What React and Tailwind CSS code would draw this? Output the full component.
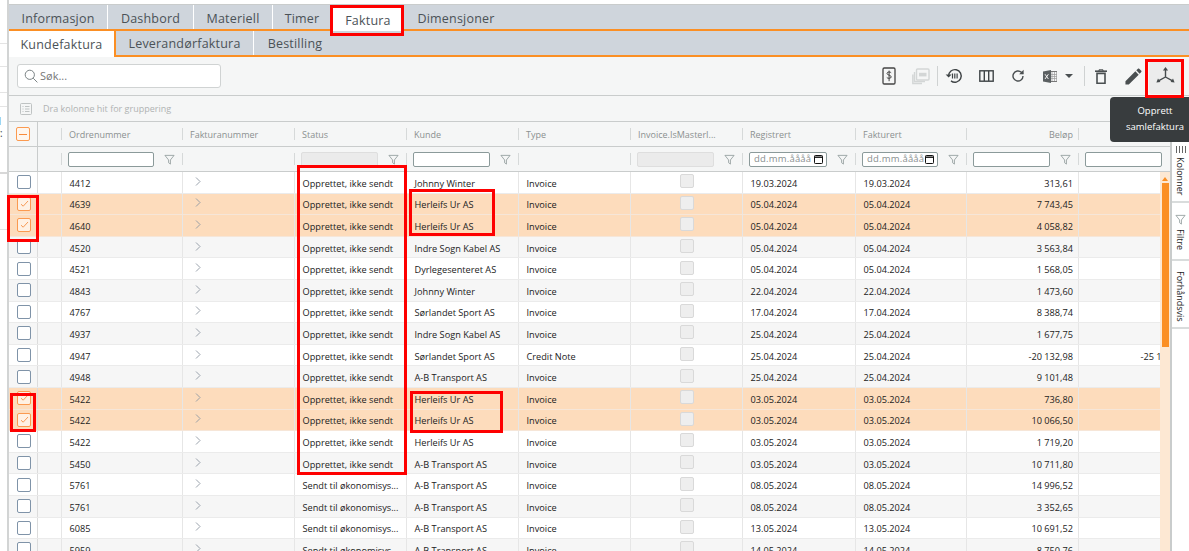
import React from "react";

const OP = "Opprettet, ikke sendt";
const SE = "Sendt til økonomisys...";
const HU = "Herleifs Ur AS";
const AB = "A-B Transport AS";
const JW = "Johnny Winter";
const IS = "Indre Sogn Kabel AS";
const SS = "Sørlandet Sport AS";

const rows = [
  ["4412", OP, JW, "Invoice", "19.03.2024", "313,61", "w"],
  ["4639", OP, HU, "Invoice", "05.04.2024", "7 743,45", "s"],
  ["4640", OP, HU, "Invoice", "05.04.2024", "4 058,82", "s"],
  ["4520", OP, IS, "Invoice", "05.04.2024", "3 563,84", "g"],
  ["4521", OP, "Dyrlegesenteret AS", "Invoice", "05.04.2024", "1 568,05", "w"],
  ["4843", OP, JW, "Invoice", "22.04.2024", "1 473,60", "g"],
  ["4767", OP, SS, "Invoice", "17.04.2024", "8 388,74", "w"],
  ["4937", OP, IS, "Invoice", "25.04.2024", "1 677,75", "g"],
  ["4947", OP, SS, "Credit Note", "25.04.2024", "-20 132,98", "w", "-25 166,23"],
  ["4948", OP, AB, "Invoice", "25.04.2024", "9 101,48", "g"],
  ["5422", OP, HU, "Invoice", "03.05.2024", "736,80", "s"],
  ["5422", OP, HU, "Invoice", "03.05.2024", "10 066,50", "s"],
  ["5422", OP, HU, "Invoice", "03.05.2024", "1 719,20", "w"],
  ["5450", OP, AB, "Invoice", "03.05.2024", "10 711,80", "g"],
  ["5761", SE, AB, "Invoice", "08.05.2024", "14 996,52", "w"],
  ["5761", SE, AB, "Invoice", "08.05.2024", "3 352,65", "g"],
  ["6085", SE, AB, "Invoice", "13.05.2024", "10 691,52", "w"],
  ["5959", SE, AB, "Invoice", "14.05.2024", "8 750,76", "g"],
];

const rowBg = {
  w: "bg-white border-[#ebebeb]",
  g: "bg-[#f6f6f6] border-[#ebebeb]",
  s: "bg-[#fddcbc] border-[#f6e6d8]",
};

const Funnel = () => (
  <svg className="block" width="11" height="11" viewBox="0 0 12 12" fill="none" stroke="#8f9a9a" strokeWidth="0.9" strokeLinejoin="round">
    <path d="M1 1.5h10L7 6.5v4.5L5 9.5v-3z" />
  </svg>
);

const Chevron = () => (
  <svg className="block" width="6" height="9" viewBox="0 0 6 9" fill="none" stroke="#8e97a3" strokeWidth="0.9">
    <path d="M1 0.5l4 4-4 4" />
  </svg>
);

const Check = ({ on }) =>
  on ? (
    <div className="w-[14px] h-[14px] rounded-[2px] border border-[#fb9a50] bg-[#fff1e4] flex items-center justify-center">
      <svg width="9" height="8" viewBox="0 0 9 8" fill="none" stroke="#f79a56" strokeWidth="1">
        <path d="M1 4.2l2.2 2L8 1" />
      </svg>
    </div>
  ) : (
    <div className="w-[14px] h-[14px] rounded-[2px] border border-[#7f93a8] bg-white" />
  );

const Sep = () => <div className="w-px h-[12px] bg-[#d6d9d9] shrink-0" />;

const HeadCell = ({ w, children, right }) => (
  <div className={`${w} shrink-0 h-full flex items-center`}>
    <Sep />
    <span className={`pl-[7px] pr-[5px] pt-[2px] flex-1 whitespace-nowrap ${right ? "text-right" : ""}`}>{children}</span>
  </div>
);

const FilterCell = ({ w, kind }) => (
  <div className={`${w} shrink-0 h-full flex items-center`}>
    <Sep />
    {kind === "none" ? null : (
      <>
        <div className="flex-1 pl-[6px] min-w-0">
          {kind === "text" && <div className="h-[15px] bg-white border border-[#8b9a9a] rounded-[2px]" />}
          {kind === "off" && <div className="h-[15px] bg-[#ebebeb] border border-[#dedede] rounded-[2px]" />}
          {kind === "date" && (
            <div className="h-[15px] bg-white border border-[#8b9a9a] rounded-[2px] flex items-center justify-between pl-[4px] pr-[3px] text-[9.5px] text-[#8a8f8f] tracking-[0.2px]">
              <span>dd.mm.åååå</span>
              <svg width="9" height="10" viewBox="0 0 9 10" fill="none" stroke="#111" strokeWidth="1">
                <rect x="0.5" y="1.5" width="8" height="8" rx="0.8" />
                <path d="M0.5 3.2h8" strokeWidth="1.4" />
              </svg>
            </div>
          )}
        </div>
        <div className="w-[28px] shrink-0 pl-[10px]">
          <Funnel />
        </div>
      </>
    )}
  </div>
);

const Cell = ({ w, right, children, center }) => (
  <div className={`${w} shrink-0 h-full flex items-center border-l border-[#e6e6e6]`}>
    {center ? (
      <div className="flex-1 flex justify-center">{children}</div>
    ) : (
      <span className={`flex-1 whitespace-nowrap pl-[7.5px] pr-[5px] pt-[3px] ${right ? "text-right" : ""}`}>{children}</span>
    )}
  </div>
);

const TopTab = ({ w, active, children }) => (
  <div
    className={`${w} shrink-0 flex items-center justify-center pt-[4px] ${
      active ? "bg-white h-[28px] self-start" : "h-full border-r border-white"
    }`}
  >
    {children}
  </div>
);

const Tool = ({ children, active, w = "w-[32px]" }) => (
  <div className={`${w} h-[35px] shrink-0 flex items-center justify-center rounded-[3px] ${active ? "bg-[#ececec]" : ""}`}>
    {children}
  </div>
);

const Toolbar = () => (
  <div className="flex items-center justify-end pr-[8px]">
    <Tool>
      <svg width="14" height="18" viewBox="0 0 14 18" fill="none" stroke="#444" strokeWidth="1.3">
        <rect x="1" y="1" width="12" height="16" rx="1.2" />
        <path d="M9.2 5.8C8.7 4.9 5 4.4 5 6.4c0 2.1 4.2 1.4 4.2 3.5 0 2-3.8 1.6-4.4.6M7.1 3.6v10.6" strokeWidth="1" />
      </svg>
    </Tool>
    <Tool>
      <svg width="18" height="17" viewBox="0 0 18 17" fill="none" stroke="#d3d6d6" strokeWidth="1.4">
        <rect x="4.5" y="1" width="12.5" height="11" rx="1" />
        <path d="M2.5 4v9.5H13M0.8 6.5v9H10" />
        <rect x="7" y="4.8" width="7.5" height="3.6" fill="#d3d6d6" stroke="none" />
      </svg>
    </Tool>
    <div className="w-px h-[20px] bg-[#cfd2d2] shrink-0" />
    <Tool>
      <svg width="18" height="16" viewBox="0 0 18 16" fill="none" stroke="#3f4446" strokeWidth="1.4">
        <path d="M3.6 8A6.3 6.3 0 1 1 6 12.9" />
        <path d="M0.6 6.4l3 3 3-3" fill="#3f4446" stroke="none" />
        <path d="M7.5 5.4v5M9.8 5.4v5M12.1 5.4v5" strokeWidth="1.2" />
      </svg>
    </Tool>
    <Tool>
      <svg width="15" height="12" viewBox="0 0 15 12" fill="none" stroke="#3f4446" strokeWidth="1.4">
        <rect x="0.8" y="0.8" width="13.4" height="10.4" />
        <path d="M5.3 1v10M9.7 1v10" />
      </svg>
    </Tool>
    <Tool>
      <svg width="14" height="14" viewBox="0 0 14 14" fill="none" stroke="#4a4f51" strokeWidth="1.4">
        <path d="M12 7a5 5 0 1 1-1.6-3.7L12 4.8" />
        <path d="M12.6 0.8v4.5H8.1" fill="#4a4f51" stroke="none" />
      </svg>
    </Tool>
    <div className="w-[4px] shrink-0" />
    <Tool w="w-[23px]">
      <svg width="14" height="13" viewBox="0 0 14 13">
        <rect x="6" y="1.5" width="8" height="10" fill="none" stroke="#777" strokeWidth="1" />
        <path d="M9 2v9M11.5 2v9M6 4.5h8M6 6.5h8M6 8.5h8" stroke="#9a9a9a" strokeWidth="0.7" />
        <path d="M0 1.5l8-1.5v13l-8-1.5z" fill="#5b6062" />
        <path d="M2 4.2l3.4 4.8M5.4 4.2L2 9" stroke="#fff" strokeWidth="0.9" />
      </svg>
    </Tool>
    <Tool w="w-[15px]">
      <svg width="8" height="4" viewBox="0 0 8 4">
        <path d="M0 0h8L4 4z" fill="#4a4f51" />
      </svg>
    </Tool>
    <div className="w-[8px] shrink-0" />
    <div className="w-px h-[20px] bg-[#cfd2d2] shrink-0" />
    <Tool>
      <svg width="12" height="15" viewBox="0 0 12 15" fill="none" stroke="#4a4f51" strokeWidth="1.6">
        <path d="M0 2.2h12" />
        <path d="M4 2V0.8h4V2" strokeWidth="1" />
        <path d="M2 4.4h8v9.8H2z" />
      </svg>
    </Tool>
    <Tool>
      <svg width="17" height="17" viewBox="2.5 2.5 19 19" fill="#4a4f51">
        <path d="M3 17.25V21h3.75L17.81 9.94l-3.75-3.75L3 17.25zM20.71 7.04c.39-.39.39-1.02 0-1.41l-2.34-2.34c-.39-.39-1.02-.39-1.41 0l-1.83 1.83 3.75 3.75 1.83-1.83z" />
      </svg>
    </Tool>
    <Tool active>
      <svg width="19" height="18" viewBox="0 0 19 18" fill="none" stroke="#454a4c" strokeWidth="1.4">
        <path d="M9.5 10V2.5M9.5 10l-6.6 3.6M9.5 10l6.6 3.6" />
        <path d="M9.5 0l2.6 3.4H6.9z M0.4 15.4l1.6-4 2.4 3.7z M18.6 15.4l-1.6-4-2.4 3.7z" fill="#454a4c" stroke="none" />
      </svg>
    </Tool>
  </div>
);

const W = {
  ord: "w-[121px]",
  col: "w-[112px]",
  fak: "w-[112px]",
  reg: "w-[113px]",
  ft: "w-[111px]",
};

const SideTab = ({ h, pt, icon, label }) => (
  <div className={`${h} ${pt} w-full border-b-2 border-[#d9dcdc] flex flex-col items-center`}>
    {icon}
    <span className="[writing-mode:vertical-rl] text-[9px] text-[#222] leading-none">{label}</span>
  </div>
);

const Red = ({ c }) => <div className={`absolute border-[3px] border-[#fe0000] pointer-events-none ${c}`} />;

export default function App() {
  return (
    <div className="relative w-[1189px] h-[551px] overflow-hidden bg-white flex font-['Open_Sans',sans-serif]">
      {/* sliver of the neighbouring panel */}
      <div className="w-[7px] shrink-0 flex flex-col text-[10px] text-[#444] leading-none overflow-hidden">
        <div className="h-[44px] border-b border-[#e4e4e4]" />
        <div className="h-[23px] border-b border-[#e4e4e4]" />
        <div className="h-[26px] border-b border-[#e4e4e4]" />
        <div className="h-[14px] border-b border-[#e4e4e4]" />
        <div className="h-[67px] border-b-2 border-[#d8d8d8] pt-[9px] whitespace-nowrap">
          <div className="-ml-[4px] h-[12px]">il</div>
          <div className="-ml-[4px] h-[12px]">r:</div>
        </div>
        <div className="h-[56px] border-b border-[#e4e4e4]" />
      </div>
      <div className="w-[2px] shrink-0 bg-[#d2d4d4]" />

      <div className="flex-1 min-w-0 flex flex-col pt-[4px]">
        {/* main tabs */}
        <div className="h-[27px] shrink-0 bg-[#cfd5dc] border-t border-[#c9cccc] border-b-2 border-b-[#fb8f24] flex text-[12.5px] text-[#4b5257] tracking-[0.2px]">
          <TopTab w="w-[99px]">Informasjon</TopTab>
          <TopTab w="w-[86px]">Dashbord</TopTab>
          <TopTab w="w-[79px]">Materiell</TopTab>
          <TopTab w="w-[59px]">Timer</TopTab>
          <TopTab w="w-[72px]" active>Faktura</TopTab>
          <div className="w-[104px] flex items-center justify-center pt-[4px]">Dimensjoner</div>
        </div>
        {/* sub tabs */}
        <div className="h-[26px] shrink-0 bg-[#cfd5dc] border-b-2 border-b-[#fb8f24] flex text-[12.5px] text-[#4b5257] tracking-[0.2px]">
          <div className="w-[107px] h-[26px] bg-white border-r-2 border-[#fb8f24] flex items-center justify-center pt-[3px]">Kundefaktura</div>
          <div className="w-[138px] flex items-center justify-center pt-[3px] border-r border-white">Leverandørfaktura</div>
          <div className="w-[82px] flex items-center justify-center pt-[3px]">Bestilling</div>
        </div>

        {/* toolbar */}
        <div className="h-[39px] shrink-0 bg-[#f5f6f6] border-b border-[#c9cccc] flex items-center justify-between pl-[8px]">
          <div className="w-[204px] h-[24px] bg-white border border-[#d0d3d3] rounded-[3px] flex items-center pl-[6px] gap-[2px]">
            <svg width="14" height="14" viewBox="0 0 14 14" fill="none" stroke="#7c8486" strokeWidth="1">
              <circle cx="5.8" cy="5.8" r="4.6" />
              <path d="M9.2 9.2l4.2 4.2" />
            </svg>
            <span className="text-[11px] text-[#777] pt-[1px]">Søk...</span>
          </div>
          <Toolbar />
        </div>

        {/* group row */}
        <div className="h-[26px] shrink-0 bg-[#f5f6f6] border-b border-[#c9cccc] flex items-center pl-[11px] gap-[11px] text-[9px] text-[#b0b3b3]">
          <svg width="12" height="12" viewBox="0 0 12 12" fill="none" stroke="#b9bdbd" strokeWidth="0.9">
            <rect x="0.5" y="0.5" width="11" height="11" rx="1" />
            <path d="M2.5 3.5h1M5 3.5h4.5M2.5 6h1M5 6h4.5M2.5 8.5h1M5 8.5h4.5" />
          </svg>
          <span>Dra kolonne hit for gruppering</span>
        </div>

        {/* grid and side panel */}
        <div className="flex-1 min-h-0 flex">
          <div className="w-[1161px] shrink-0 flex flex-col overflow-hidden">
            {/* header */}
            <div className="h-[25px] shrink-0 bg-[#f5f6f6] border-b border-[#c9cccc] flex text-[9px] text-[#8b9090]">
              <div className="w-[29px] shrink-0 h-full flex items-center pl-[7px] border-r border-[#c9cccc]">
                <div className="w-[14px] h-[14px] rounded-[2px] border border-[#fb9a50] bg-[#fff6ee] flex items-center justify-center">
                  <div className="w-[8px] h-px bg-[#f98a3a]" />
                </div>
              </div>
              <div className="w-[23px] shrink-0" />
              <HeadCell w={W.ord}>Ordrenummer</HeadCell>
              <HeadCell w={W.fak}>Fakturanummer</HeadCell>
              <HeadCell w={W.col}>Status</HeadCell>
              <HeadCell w={W.col}>Kunde</HeadCell>
              <HeadCell w={W.col}>Type</HeadCell>
              <HeadCell w={W.col}>Invoice.IsMasterI...</HeadCell>
              <HeadCell w={W.reg}>Registrert</HeadCell>
              <HeadCell w={W.ft}>Fakturert</HeadCell>
              <HeadCell w={W.col} right>Beløp</HeadCell>
              <HeadCell w={W.col} right>Bruttobeløp</HeadCell>
            </div>
            {/* filters */}
            <div className="h-[25px] shrink-0 bg-[#f5f6f6] border-b border-[#c9cccc] flex">
              <div className="w-[29px] shrink-0 h-full border-r border-[#c9cccc]" />
              <div className="w-[23px] shrink-0" />
              <FilterCell w={W.ord} kind="text" />
              <FilterCell w={W.fak} kind="none" />
              <FilterCell w={W.col} kind="off" />
              <FilterCell w={W.col} kind="text" />
              <FilterCell w={W.col} kind="none" />
              <FilterCell w={W.col} kind="off" />
              <FilterCell w={W.reg} kind="date" />
              <FilterCell w={W.ft} kind="date" />
              <FilterCell w={W.col} kind="text" />
              <div className="w-[112px] shrink-0 h-full flex items-center">
                <Sep />
                <div className="pl-[6px]">
                  <div className="w-[77px] h-[15px] bg-white border border-[#8b9a9a] rounded-[2px]" />
                </div>
              </div>
            </div>
            {/* rows */}
            <div className="flex-1 min-h-0 flex overflow-hidden">
              <div className="w-[1151px] shrink-0 overflow-hidden text-[9.2px] text-[#222]">
                {rows.map((r, i) => (
                  <div key={i} className={`h-[21.6px] flex border-b ${rowBg[r[6]]}`}>
                    <div className="w-[29px] shrink-0 h-full flex items-center pl-[8px] border-r border-[#dcdcdc]">
                      <Check on={r[6] === "s"} />
                    </div>
                    <div className="w-[23px] shrink-0" />
                    <Cell w={W.ord}>{r[0]}</Cell>
                    <Cell w={W.fak} center>
                      <div className="w-full pl-[12px] -mt-[2px]"><Chevron /></div>
                    </Cell>
                    <Cell w={W.col}>{r[1]}</Cell>
                    <Cell w={W.col}>{r[2]}</Cell>
                    <Cell w={W.col}>{r[3]}</Cell>
                    <Cell w={W.col} center>
                      <div className="w-[14px] h-[14px] rounded-[2px] bg-[#eeeeee] border border-[#d9d9d9] -mt-[2px]" />
                    </Cell>
                    <Cell w={W.reg}>{r[4]}</Cell>
                    <Cell w={W.ft}>{r[4]}</Cell>
                    <Cell w={W.col} right>{r[5]}</Cell>
                    <Cell w={W.col} right>{r[7] || ""}</Cell>
                  </div>
                ))}
              </div>
              <div className="w-[10px] shrink-0 bg-[#fde8d3] flex flex-col items-center pt-[5px] gap-[2px]">
                <div className="w-0 h-0 border-l-[3px] border-r-[3px] border-b-[4px] border-l-transparent border-r-transparent border-b-[#fb8f24]" />
                <div className="w-[7px] h-[164px] bg-[#fb8f24]" />
              </div>
            </div>
          </div>

          {/* side panel */}
          <div className="flex-1 min-w-0 bg-white border-l-2 border-[#c9cccc] flex flex-col pt-[21px] relative">
            <SideTab
              h="h-[60px]"
              pt="pt-[3px] gap-[4px]"
              label="Kolonner"
              icon={
                <svg className="block" width="10" height="7" viewBox="0 0 10 7" fill="none" stroke="#666" strokeWidth="1">
                  <path d="M0.5 0v7M3.5 0v7M6.5 0v7M9.5 0v7" />
                </svg>
              }
            />
            <SideTab h="h-[58px]" pt="pt-[11px] gap-[4px]" label="Filtre" icon={<Funnel />} />
            <SideTab h="h-[68px]" pt="pt-[10px]" label="Forhåndsvis" />
          </div>
        </div>
      </div>

      {/* tooltip */}
      <div className="absolute left-[1110px] top-[97px] w-[90px] h-[45px] bg-[#383c3e] rounded-[4px] text-white text-[9.5px] font-medium leading-[16px] text-center pt-[6px]">
        <div>Opprett</div>
        <div>samlefaktura</div>
      </div>

      {/* red annotation frames */}
      <Red c="left-[330px] top-[5px] w-[74px] h-[31px]" />
      <Red c="left-[1145px] top-[59px] w-[39px] h-[39px]" />
      <Red c="left-[7px] top-[195px] w-[32px] h-[47px]" />
      <Red c="left-[10px] top-[393px] w-[26px] h-[39px]" />
      <Red c="left-[297px] top-[165px] w-[110px] h-[310px]" />
      <Red c="left-[409px] top-[189px] w-[86px] h-[47px]" />
      <Red c="left-[410px] top-[391px] w-[93px] h-[42px]" />
    </div>
  );
}
